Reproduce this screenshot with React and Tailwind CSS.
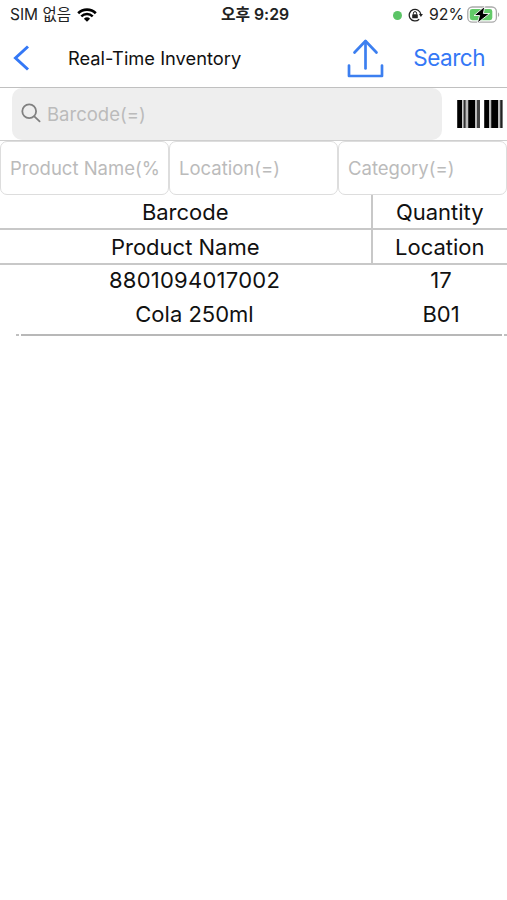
import React from 'react';

const filtros = [
  { id: 'product', placeholder: 'Product Name(%' },
  { id: 'location', placeholder: 'Location(=)' },
  { id: 'category', placeholder: 'Category(=)' },
];

const items = [
  { barcode: '8801094017002', quantity: 17, name: 'Cola 250ml', location: 'B01' },
];

// x position, width and colour of each stripe
const bars = [
  [0.2, 4.8, '#000'],
  [5, 1.5, '#ccc'],
  [6.5, 2.3, '#333'],
  [8.8, 2.4, '#bbb'],
  [11.2, 6.8, '#000'],
  [18, 2, '#bbb'],
  [20, 3, '#444'],
  [27.2, 4.8, '#000'],
  [32, 2.2, '#bbb'],
  [34.2, 6.8, '#000'],
  [41, 2.2, '#bbb'],
  [43.2, 2.4, '#222'],
];

function StatusBar() {
  return (
    <div className="flex h-[30px] items-center text-[15px] text-[#222]">
      <div className="flex flex-1 items-center gap-[6px] pl-[10px]">
        <span className="w-[61px] whitespace-nowrap text-[15.5px]">SIM 없음</span>
        <svg width="20" height="14" viewBox="0 0 20 14" className="text-black">
          <path d="M1.2 5.2a12.6 12.6 0 0 1 17.6 0" fill="none" stroke="currentColor" strokeWidth="2.7" />
          <path d="M4.3 8.4a8.2 8.2 0 0 1 11.4 0" fill="none" stroke="currentColor" strokeWidth="2.5" />
          <path d="M10 13.8 6.9 10.7a4.5 4.5 0 0 1 6.2 0z" fill="currentColor" />
        </svg>
      </div>
      <span className="whitespace-nowrap text-[15.8px] font-semibold">오후 9:29</span>
      <div className="flex flex-1 items-center justify-end pr-[7px]">
        <span className="mr-[6px] h-[9px] w-[9px] rounded-full bg-[#5bc466]" />
        {/* Rotation lock */}
        <svg width="15" height="14" viewBox="0 0 15 14" className="mr-[6px]" fill="none" stroke="#222" strokeWidth="1.3">
          <path d="M11.2 11.2A5.8 5.8 0 1 1 12.8 6.4" />
          <path d="M10.9 6h4l-2 3z" fill="#222" stroke="none" />
          <rect x="4.2" y="6.3" width="5.6" height="4" rx="0.6" fill="#222" stroke="none" />
          <path d="M5.4 6.5V5.2a1.6 1.6 0 0 1 3.2 0v1.3" strokeWidth="1" />
        </svg>
        <span className="w-[36px] whitespace-nowrap text-[15.8px]">92%</span>
        <svg width="33" height="18" viewBox="0 0 33 18" className="ml-[2px]">
          <rect x="0.8" y="1" width="28.6" height="15.2" rx="4.5" fill="none" stroke="#aaa" strokeWidth="1.3" />
          <rect x="2.8" y="3" width="22.5" height="11.2" rx="2.4" fill="#62ca68" />
          <path d="M31 6.5v4.4c1.6-.6 1.6-3.8 0-4.4z" fill="#aaa" />
          <path d="M17.8.3 7 9.5h5.6l-2.3 7.7L22.6 7.5h-6.2z" fill="#000" stroke="#fff" strokeWidth="0.9" />
        </svg>
      </div>
    </div>
  );
}

function NavBar() {
  return (
    <div className="flex h-[58px] items-center border-b-[1.5px] border-[#c0c0c0]">
      <button type="button" className="ml-[13px] w-[55px] pb-[2px]">
        <svg width="17" height="26" viewBox="0 0 17 26" fill="none" stroke="#3478f6" strokeWidth="3">
          <path d="M15 1.5 2.5 13 15 24.5" />
        </svg>
      </button>
      <h1 className="flex-1 whitespace-nowrap text-[18.3px] text-[#111]">Real-Time Inventory</h1>
      <button type="button" className="mr-[29px]">
        <svg width="37" height="40" viewBox="0 0 37 40" fill="none" stroke="#3c7ff0" strokeWidth="2.7" strokeLinecap="round" strokeLinejoin="round">
          <path d="M2 26.5V37h33V26.5" />
          <path d="M18.5 29.5V2.5" />
          <path d="m7.5 13.5 11-11.5 11 11.5" />
        </svg>
      </button>
      <button type="button" className="mr-[22px] pb-[2px] text-[22.5px] tracking-[-0.5px] text-[#3478f6]">Search</button>
    </div>
  );
}

function SearchRow() {
  return (
    <div className="flex h-[53px] items-center border-b border-[#cfcfcf]">
      <label className="ml-3 flex h-full w-[430px] items-center rounded-[10px] bg-[#eee] pl-[9px]">
        <svg width="20" height="20" viewBox="0 0 20 20" fill="none" stroke="#808080" strokeWidth="1.8" strokeLinecap="round" className="mb-[2px]">
          <circle cx="8.2" cy="8.2" r="6.9" />
          <path d="m13.3 13.3 5.3 5" />
        </svg>
        <input placeholder="Barcode(=)" className="ml-[6px] w-[300px] bg-transparent pt-[2px] text-[18.5px] outline-none placeholder:text-[#bbb]" />
      </label>
      <svg width="46" height="28" viewBox="0 0 46 28" className="ml-[15px]">
        {bars.map(([x, width, fill]) => (
          <rect key={x} x={x} y="0" width={width} height="28" fill={fill} />
        ))}
      </svg>
    </div>
  );
}

export default function App() {
  return (
    <div className="h-[900px] w-[507px] overflow-hidden bg-white font-['Inter','Noto_Sans_CJK_KR',sans-serif] text-[#111]">
      <StatusBar />
      <NavBar />
      <SearchRow />

      <div className="grid h-[54px] grid-cols-3">
        {filtros.map((filtro) => (
          <input
            key={filtro.id}
            placeholder={filtro.placeholder}
            className="h-full w-full min-w-0 rounded-[7px] border border-[#ddd] pl-[9px] text-[18.5px] outline-none placeholder:text-[#bbb]"
          />
        ))}
      </div>

      {/* Table header: two lines per record */}
      <div className="grid grid-cols-[370.5px_1fr] text-center text-[22px] leading-[35px]">
        <div className="h-[35px] border-b-2 border-[#c8c8c8]">Barcode</div>
        <div className="h-[35px] border-b-2 border-l-2 border-[#c8c8c8]">Quantity</div>
        <div className="h-[35px] border-b-2 border-[#c8c8c8]">Product Name</div>
        <div className="h-[35px] border-b-2 border-l-2 border-[#c8c8c8]">Location</div>
      </div>

      {items.map((item) => (
        <div key={item.barcode}>
          <div className="grid h-[69px] grid-cols-[389px_104px] content-start text-center text-[22px]">
            <div className="h-[33px] leading-[31px] tracking-[0.25px]">{item.barcode}</div>
            <div className="h-[33px] leading-[31px]">{item.quantity}</div>
            <div className="leading-[33px]">{item.name}</div>
            <div className="leading-[33px]">{item.location}</div>
          </div>
          <div className="ml-4 flex gap-[2px]">
            <span className="h-[1.5px] w-[3px] bg-[#c0c0c0]" />
            <span className="h-[1.5px] w-[481px] bg-[#b8b8b8]" />
            <span className="h-[1.5px] flex-1 bg-[#c0c0c0]" />
          </div>
        </div>
      ))}
    </div>
  );
}
